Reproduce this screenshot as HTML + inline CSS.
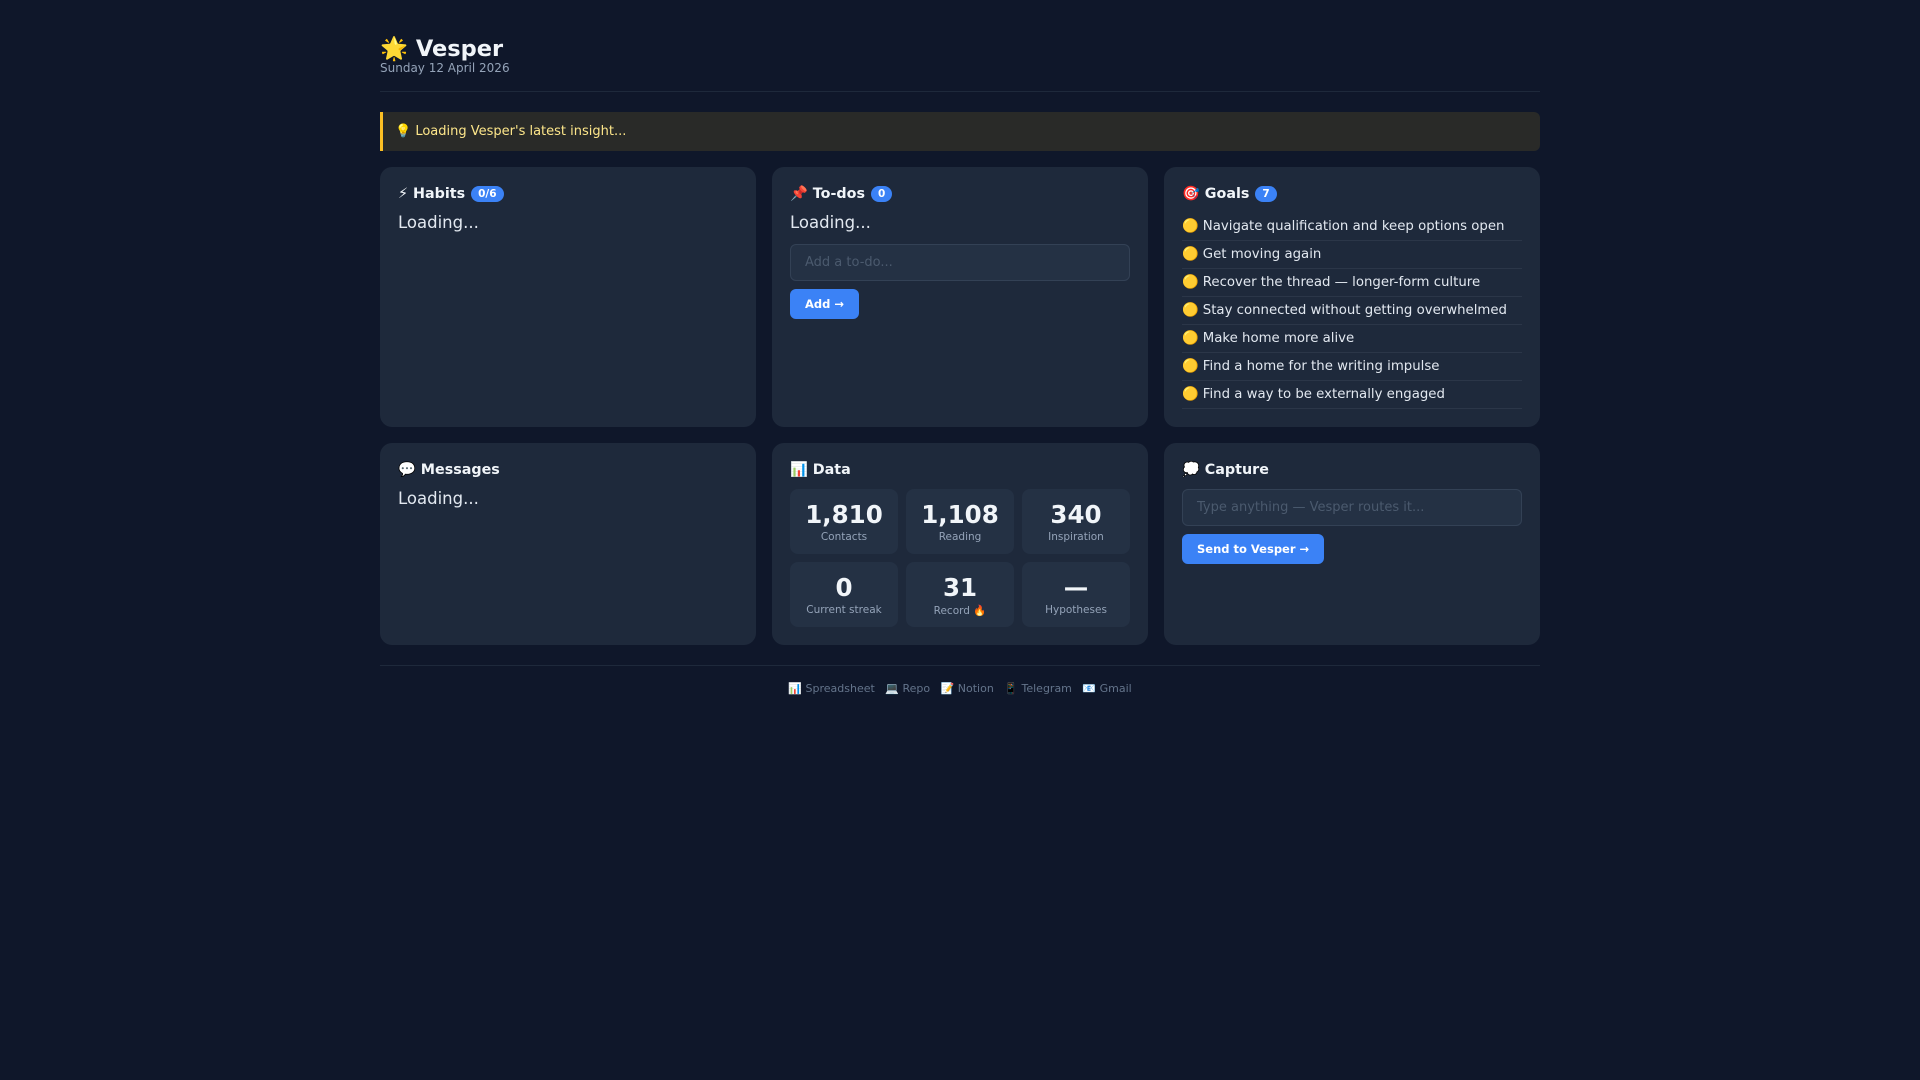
<!DOCTYPE html>
<html><head><meta charset="utf-8"><style>
*{box-sizing:border-box;margin:0;padding:0}
body{background:#0f172a;color:#e2e8f0;font-family:"DejaVu Sans","Liberation Sans",sans-serif;width:1920px;height:1080px;overflow:hidden}
.wrap{position:absolute;left:380px;width:1160px;top:0}
h1{position:absolute;top:33px;left:0;font-size:22.5px;font-weight:bold;color:#f1f5f9;line-height:32px}
.date{position:absolute;top:61px;left:0;font-size:12px;color:#94a3b8}
.hr{position:absolute;top:91px;left:0;width:1160px;height:1px;background:#1e293b}
.ins{position:absolute;top:112px;left:0;width:1160px;height:39px;background:#292a28;border-left:3px solid #fbbf24;border-radius:0 6px 6px 0;font-size:13px;color:#fde68a;padding-left:12px;line-height:40px}
.card{position:absolute;background:#1e293b;border-radius:12px;padding:17px 18px;width:376px}
.t{font-size:14.3px;font-weight:bold;color:#f1f5f9;height:20px;line-height:20px;display:flex;align-items:center;gap:5px}
.b{background:#3b82f6;color:#fff;font-size:10.5px;border-radius:8px;padding:1px 7px;line-height:14px;margin-left:1px}
.ld{font-size:16.5px;margin-top:9px;color:#e2e8f0}
.inp{height:37px;background:#243144;border:1px solid #334155;border-radius:6px;font-size:13px;color:#4b5a6e;padding-left:14px;line-height:35px}
.btn{display:inline-block;background:#3b82f6;color:#fff;font-size:11.5px;font-weight:bold;border-radius:6px;height:30px;line-height:30px;padding:0 15px}
.g{font-size:13.3px;color:#e2e8f0;height:28px;line-height:27px;border-bottom:1px solid #2b3648}
.st{position:absolute;width:108px;height:65px;background:#243144;border-radius:8px;text-align:center}
.st b{display:block;font-size:24.5px;margin-top:11px;line-height:30px;color:#f1f5f9}
.st span{display:block;font-size:10.5px;color:#94a3b8;margin-top:1px}
.ft{position:absolute;top:665px;left:0;width:1160px;border-top:1px solid #1e293b;text-align:center;font-size:11px;color:#64748b;padding-top:16px}
</style></head><body><div class="wrap">
<h1>🌟 Vesper</h1>
<div class="date">Sunday 12 April 2026</div>
<div class="hr"></div>
<div class="ins">💡 Loading Vesper's latest insight...</div>

<div class="card" style="left:0;top:167px;height:260px"><div class="t">⚡ Habits <span class="b">0/6</span></div><div class="ld">Loading...</div></div>
<div class="card" style="left:392px;top:167px;height:260px"><div class="t">📌 To-dos <span class="b">0</span></div><div class="ld">Loading...</div>
<div class="inp" style="margin-top:12px">Add a to-do...</div><div class="btn" style="margin-top:8px">Add →</div></div>
<div class="card" style="left:784px;top:167px;height:260px"><div class="t">🎯 Goals <span class="b">7</span></div>
<div style="margin-top:9px">
<div class="g">🟡 Navigate qualification and keep options open</div>
<div class="g">🟡 Get moving again</div>
<div class="g">🟡 Recover the thread — longer-form culture</div>
<div class="g">🟡 Stay connected without getting overwhelmed</div>
<div class="g">🟡 Make home more alive</div>
<div class="g">🟡 Find a home for the writing impulse</div>
<div class="g">🟡 Find a way to be externally engaged</div></div></div>

<div class="card" style="left:0;top:443px;height:202px"><div class="t">💬 Messages</div><div class="ld">Loading...</div></div>
<div class="card" style="left:392px;top:443px;height:202px"><div class="t">📊 Data</div>
<div class="st" style="left:18px;top:46px"><b>1,810</b><span>Contacts</span></div>
<div class="st" style="left:134px;top:46px"><b>1,108</b><span>Reading</span></div>
<div class="st" style="left:250px;top:46px"><b>340</b><span>Inspiration</span></div>
<div class="st" style="left:18px;top:119px"><b>0</b><span>Current streak</span></div>
<div class="st" style="left:134px;top:119px"><b>31</b><span>Record 🔥</span></div>
<div class="st" style="left:250px;top:119px"><b>—</b><span>Hypotheses</span></div></div>
<div class="card" style="left:784px;top:443px;height:202px"><div class="t">💭 Capture</div>
<div class="inp" style="margin-top:9px">Type anything — Vesper routes it...</div><div class="btn" style="margin-top:8px">Send to Vesper →</div></div>

<div class="ft">📊 Spreadsheet &nbsp; 💻 Repo &nbsp; 📝 Notion &nbsp; 📱 Telegram &nbsp; 📧 Gmail</div>
</div></body></html>
